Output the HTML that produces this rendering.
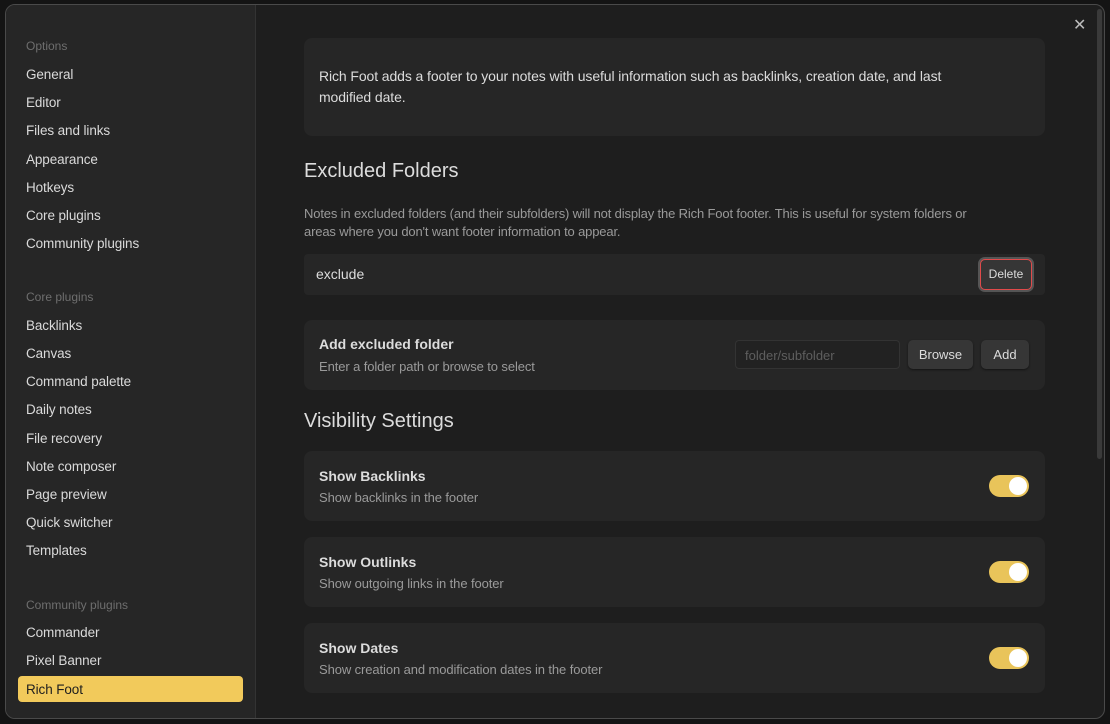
<!DOCTYPE html>
<html><head><style>
*{box-sizing:border-box;margin:0;padding:0}
body{width:1110px;height:724px;background:#141414;font-family:"Liberation Sans",sans-serif;overflow:hidden;position:relative}
.modal{position:absolute;left:5px;top:4px;width:1100px;height:715px;border:1px solid #4a4a4a;border-radius:10px;background:#1e1e1e;overflow:hidden}
.side{position:absolute;left:0;top:0;width:250px;height:100%;background:#262626;border-right:1px solid #333}
.grp{position:absolute;left:20px;font-size:12px;color:#6e6e6e}
.it{position:absolute;left:12px;width:225px;height:26px;padding-left:8px;font-size:13.5px;color:#dadada;line-height:27px;border-radius:4px;letter-spacing:-0.1px}
.it.act{background:#f2ca5b;color:#1e1e1e}
.close{position:absolute;left:1067px;top:10px;color:#bbb;font-size:16px}
.card{position:absolute;left:298px;width:741px;background:#262626;border-radius:8px}
h2{position:absolute;left:298px;font-size:20px;font-weight:normal;color:#dcdcdc}
.t{position:absolute;left:15px;font-size:14px;font-weight:bold;color:#dcdcdc}
.d{position:absolute;left:15px;font-size:13px;color:#9a9a9a;letter-spacing:-0.1px}
.tog{position:absolute;left:685px;width:40px;height:22px;border-radius:11px;background:#e9c45a}
.tog:after{content:"";position:absolute;right:2px;top:2px;width:18px;height:18px;border-radius:50%;background:#fff}
.btn{position:absolute;background:#363636;color:#dcdcdc;font-size:13px;border-radius:5px;text-align:center;box-shadow:0 1px 2px rgba(0,0,0,.5)}
.sb{position:absolute;left:1091px;top:4px;width:5px;height:450px;background:#3a3a3a;border-radius:3px}
</style></head><body>
<div class="modal">
<div class="side">
<div class="grp" style="top:34px">Options</div>
<div class="it" style="top:56px">General</div>
<div class="it" style="top:84px">Editor</div>
<div class="it" style="top:112px">Files and links</div>
<div class="it" style="top:141px">Appearance</div>
<div class="it" style="top:169px">Hotkeys</div>
<div class="it" style="top:197px">Core plugins</div>
<div class="it" style="top:225px">Community plugins</div>
<div class="grp" style="top:285px">Core plugins</div>
<div class="it" style="top:307px">Backlinks</div>
<div class="it" style="top:335px">Canvas</div>
<div class="it" style="top:363px">Command palette</div>
<div class="it" style="top:391px">Daily notes</div>
<div class="it" style="top:420px">File recovery</div>
<div class="it" style="top:448px">Note composer</div>
<div class="it" style="top:476px">Page preview</div>
<div class="it" style="top:504px">Quick switcher</div>
<div class="it" style="top:532px">Templates</div>
<div class="grp" style="top:593px">Community plugins</div>
<div class="it" style="top:614px">Commander</div>
<div class="it" style="top:642px">Pixel Banner</div>
<div class="it act" style="top:671px">Rich Foot</div>
</div>
<div class="close">✕</div>
<div class="sb"></div>
<div class="card" style="top:33px;height:98px"><div style="position:absolute;left:15px;top:28px;width:670px;font-size:14px;line-height:21px;color:#dcdcdc;letter-spacing:-0.1px">Rich Foot adds a footer to your notes with useful information such as backlinks, creation date, and last modified date.</div></div>
<h2 style="top:155px">Excluded Folders</h2>
<div style="position:absolute;left:298px;top:200px;width:680px;font-size:13px;line-height:18px;color:#9a9a9a;letter-spacing:-0.15px">Notes in excluded folders (and their subfolders) will not display the Rich Foot footer. This is useful for system folders or areas where you don't want footer information to appear.</div>
<div class="card" style="top:249px;height:41px;border-radius:4px"><div style="position:absolute;left:12px;top:12px;font-size:14px;color:#dcdcdc">exclude</div>
<div class="btn" style="left:676px;top:5px;width:52px;height:31px;border:1px solid #e04a4a;line-height:29px;font-size:12px;box-shadow:0 0 0 2px #555">Delete</div></div>
<div class="card" style="top:315px;height:70px">
<div class="t" style="top:16px">Add excluded folder</div><div class="d" style="top:39px">Enter a folder path or browse to select</div>
<div style="position:absolute;left:431px;top:20px;width:165px;height:29px;border:1px solid #333;border-radius:4px;background:#222;font-size:13px;color:#5e5e5e;padding:7px 9px">folder/subfolder</div>
<div class="btn" style="left:604px;top:20px;width:65px;height:29px;line-height:29px">Browse</div>
<div class="btn" style="left:677px;top:20px;width:48px;height:29px;line-height:29px">Add</div>
</div>
<h2 style="top:405px">Visibility Settings</h2>
<div class="card" style="top:446px;height:70px"><div class="t" style="top:17px">Show Backlinks</div><div class="d" style="top:39px">Show backlinks in the footer</div><div class="tog" style="top:24px"></div></div>
<div class="card" style="top:532px;height:70px"><div class="t" style="top:17px">Show Outlinks</div><div class="d" style="top:39px">Show outgoing links in the footer</div><div class="tog" style="top:24px"></div></div>
<div class="card" style="top:618px;height:70px"><div class="t" style="top:17px">Show Dates</div><div class="d" style="top:39px">Show creation and modification dates in the footer</div><div class="tog" style="top:24px"></div></div>
</div>
</body></html>
